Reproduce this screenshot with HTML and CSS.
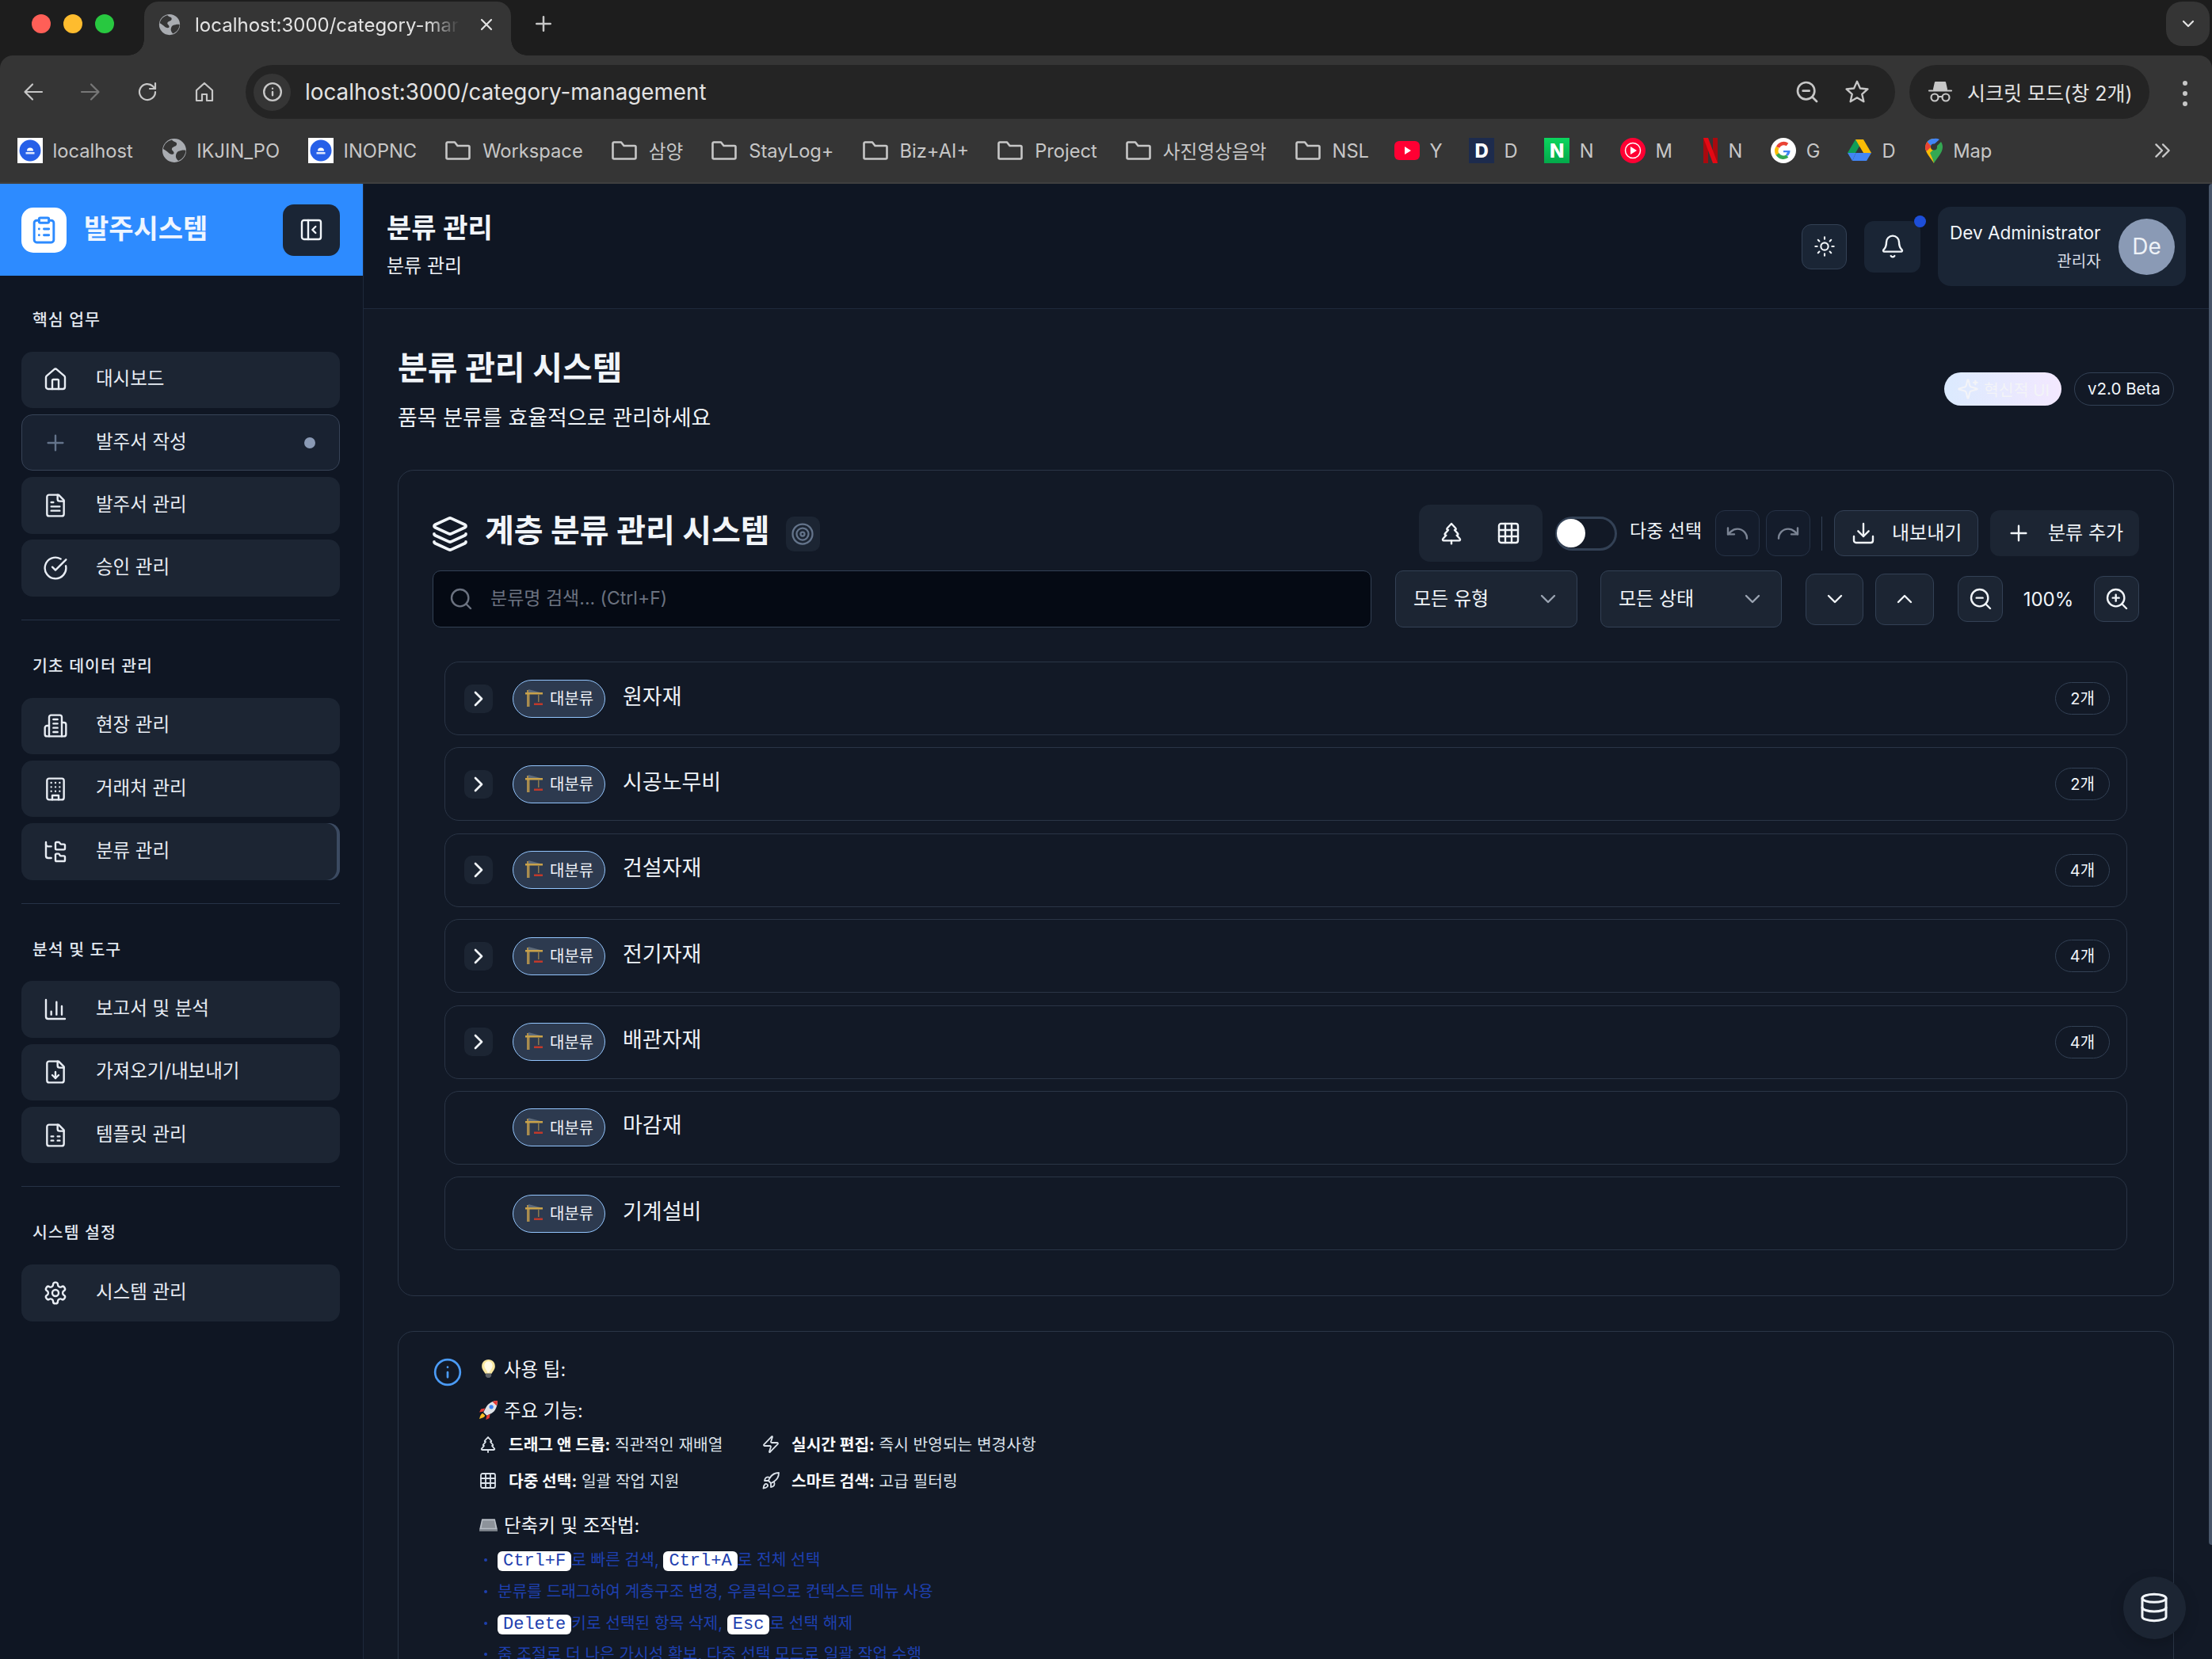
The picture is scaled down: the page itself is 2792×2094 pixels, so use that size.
FILE: index.html
```html
<!DOCTYPE html>
<html lang="ko">
<head>
<meta charset="utf-8">
<title>분류 관리</title>
<link rel="stylesheet" href="styles.css">
</head>
<body>
<svg class="sprite" xmlns="http://www.w3.org/2000/svg">
  <symbol id="home" viewBox="0 0 24 24"><path d="M15 21v-8a1 1 0 0 0-1-1h-4a1 1 0 0 0-1 1v8"/><path d="M3 10a2 2 0 0 1 .709-1.528l7-5.999a2 2 0 0 1 2.582 0l7 5.999A2 2 0 0 1 21 10v9a2 2 0 0 1-2 2H5a2 2 0 0 1-2-2z"/></symbol>
  <symbol id="plus" viewBox="0 0 24 24"><path d="M5 12h14M12 5v14"/></symbol>
  <symbol id="file-text" viewBox="0 0 24 24"><path d="M15 2H6a2 2 0 0 0-2 2v16a2 2 0 0 0 2 2h12a2 2 0 0 0 2-2V7Z"/><path d="M14 2v4a2 2 0 0 0 2 2h4"/><path d="M10 9H8M16 13H8M16 17H8"/></symbol>
  <symbol id="check" viewBox="0 0 24 24"><path d="M21.801 10A10 10 0 1 1 17 3.335"/><path d="m9 11 3 3L22 4"/></symbol>
  <symbol id="building2" viewBox="0 0 24 24"><path d="M6 22V4a2 2 0 0 1 2-2h8a2 2 0 0 1 2 2v18Z"/><path d="M6 12H4a2 2 0 0 0-2 2v6a2 2 0 0 0 2 2h2"/><path d="M18 9h2a2 2 0 0 1 2 2v9a2 2 0 0 1-2 2h-2"/><path d="M10 6h4M10 10h4M10 14h4M10 18h4"/></symbol>
  <symbol id="building" viewBox="0 0 24 24"><rect width="16" height="20" x="4" y="2" rx="2"/><path d="M9 22v-4h6v4"/><path d="M8 6h.01M16 6h.01M12 6h.01M12 10h.01M12 14h.01M16 10h.01M16 14h.01M8 10h.01M8 14h.01"/></symbol>
  <symbol id="folder-tree" viewBox="0 0 24 24"><path d="M20 10a1 1 0 0 0 1-1V6a1 1 0 0 0-1-1h-2.5a1 1 0 0 1-.8-.4l-.9-1.2A1 1 0 0 0 15 3h-2a1 1 0 0 0-1 1v5a1 1 0 0 0 1 1Z"/><path d="M20 21a1 1 0 0 0 1-1v-3a1 1 0 0 0-1-1h-2.9a1 1 0 0 1-.88-.55l-.42-.85a1 1 0 0 0-.92-.6H13a1 1 0 0 0-1 1v5a1 1 0 0 0 1 1Z"/><path d="M3 5a2 2 0 0 0 2 2h3"/><path d="M3 3v13a2 2 0 0 0 2 2h3"/></symbol>
  <symbol id="chart" viewBox="0 0 24 24"><path d="M3 3v16a2 2 0 0 0 2 2h16"/><path d="M18 17V9M13 17V5M8 17v-3"/></symbol>
  <symbol id="file-down" viewBox="0 0 24 24"><path d="M15 2H6a2 2 0 0 0-2 2v16a2 2 0 0 0 2 2h12a2 2 0 0 0 2-2V7Z"/><path d="M14 2v4a2 2 0 0 0 2 2h4"/><path d="M12 18v-6"/><path d="m9 15 3 3 3-3"/></symbol>
  <symbol id="file-sheet" viewBox="0 0 24 24"><path d="M15 2H6a2 2 0 0 0-2 2v16a2 2 0 0 0 2 2h12a2 2 0 0 0 2-2V7Z"/><path d="M14 2v4a2 2 0 0 0 2 2h4"/><path d="M8 13h2M14 13h2M8 17h2M14 17h2"/></symbol>
  <symbol id="settings" viewBox="0 0 24 24"><path d="M12.22 2h-.44a2 2 0 0 0-2 2v.18a2 2 0 0 1-1 1.73l-.43.25a2 2 0 0 1-2 0l-.15-.08a2 2 0 0 0-2.73.73l-.22.38a2 2 0 0 0 .73 2.73l.15.1a2 2 0 0 1 1 1.72v.51a2 2 0 0 1-1 1.74l-.15.09a2 2 0 0 0-.73 2.73l.22.38a2 2 0 0 0 2.73.73l.15-.08a2 2 0 0 1 2 0l.43.25a2 2 0 0 1 1 1.73V20a2 2 0 0 0 2 2h.44a2 2 0 0 0 2-2v-.18a2 2 0 0 1 1-1.73l.43-.25a2 2 0 0 1 2 0l.15.08a2 2 0 0 0 2.73-.73l.22-.39a2 2 0 0 0-.73-2.73l-.15-.08a2 2 0 0 1-1-1.74v-.5a2 2 0 0 1 1-1.74l.15-.09a2 2 0 0 0 .73-2.73l-.22-.38a2 2 0 0 0-2.73-.73l-.15.08a2 2 0 0 1-2 0l-.43-.25a2 2 0 0 1-1-1.73V4a2 2 0 0 0-2-2z"/><circle cx="12" cy="12" r="3"/></symbol>
  <symbol id="clipboard" viewBox="0 0 24 24"><rect width="8" height="4" x="8" y="2" rx="1" ry="1"/><path d="M16 4h2a2 2 0 0 1 2 2v14a2 2 0 0 1-2 2H6a2 2 0 0 1-2-2V6a2 2 0 0 1 2-2h2"/><path d="M12 11h4M12 16h4M8 11h.01M8 16h.01"/></symbol>
  <symbol id="panel" viewBox="0 0 24 24"><rect width="18" height="18" x="3" y="3" rx="2"/><path d="M9 3v18"/><path d="m16 15-3-3 3-3"/></symbol>
  <symbol id="sun" viewBox="0 0 24 24"><circle cx="12" cy="12" r="4"/><path d="M12 2v2M12 20v2M4.93 4.93l1.41 1.41M17.66 17.66l1.41 1.41M2 12h2M20 12h2M6.34 17.66l-1.41 1.41M19.07 4.93l-1.41 1.41"/></symbol>
  <symbol id="bell" viewBox="0 0 24 24"><path d="M10.268 21a2 2 0 0 0 3.464 0"/><path d="M3.262 15.326A1 1 0 0 0 4 17h16a1 1 0 0 0 .74-1.673C19.41 13.956 18 12.499 18 8A6 6 0 0 0 6 8c0 4.499-1.411 5.956-2.738 7.326"/></symbol>
  <symbol id="layers" viewBox="0 0 24 24"><path d="M12.83 2.18a2 2 0 0 0-1.66 0L2.6 6.08a1 1 0 0 0 0 1.83l8.58 3.91a2 2 0 0 0 1.66 0l8.58-3.9a1 1 0 0 0 0-1.83z"/><path d="M2 12a1 1 0 0 0 .58.91l8.6 3.91a2 2 0 0 0 1.65 0l8.58-3.9A1 1 0 0 0 22 12"/><path d="M2 17a1 1 0 0 0 .58.91l8.6 3.91a2 2 0 0 0 1.65 0l8.58-3.9A1 1 0 0 0 22 17"/></symbol>
  <symbol id="target" viewBox="0 0 24 24"><circle cx="12" cy="12" r="10"/><circle cx="12" cy="12" r="6"/><circle cx="12" cy="12" r="2"/></symbol>
  <symbol id="search" viewBox="0 0 24 24"><circle cx="11" cy="11" r="8"/><path d="m21 21-4.3-4.3"/></symbol>
  <symbol id="tree" viewBox="0 0 24 24"><path d="m17 14 3 3.3a1 1 0 0 1-.7 1.7H4.7a1 1 0 0 1-.7-1.7L7 14h-.3a1 1 0 0 1-.7-1.7L9 9h-.2A1 1 0 0 1 8 7.3L12 3l4 4.3a1 1 0 0 1-.8 1.7H15l3 3.3a1 1 0 0 1-.7 1.7H17Z"/><path d="M12 22v-3"/></symbol>
  <symbol id="grid" viewBox="0 0 24 24"><rect width="18" height="18" x="3" y="3" rx="2"/><path d="M3 9h18M3 15h18M9 3v18M15 3v18"/></symbol>
  <symbol id="undo" viewBox="0 0 24 24"><path d="M3 7v6h6"/><path d="M21 17a9 9 0 0 0-9-9 9 9 0 0 0-6 2.3L3 13"/></symbol>
  <symbol id="redo" viewBox="0 0 24 24"><path d="M21 7v6h-6"/><path d="M3 17a9 9 0 0 1 9-9 9 9 0 0 1 6 2.3l3 2.7"/></symbol>
  <symbol id="download" viewBox="0 0 24 24"><path d="M21 15v4a2 2 0 0 1-2 2H5a2 2 0 0 1-2-2v-4"/><path d="m7 10 5 5 5-5"/><path d="M12 15V3"/></symbol>
  <symbol id="down" viewBox="0 0 24 24"><path d="m6 9 6 6 6-6"/></symbol>
  <symbol id="up" viewBox="0 0 24 24"><path d="m18 15-6-6-6 6"/></symbol>
  <symbol id="right" viewBox="0 0 24 24"><path d="m9 18 6-6-6-6"/></symbol>
  <symbol id="zoom-in" viewBox="0 0 24 24"><circle cx="11" cy="11" r="8"/><path d="m21 21-4.3-4.3M11 8v6M8 11h6"/></symbol>
  <symbol id="zoom-out" viewBox="0 0 24 24"><circle cx="11" cy="11" r="8"/><path d="m21 21-4.3-4.3M8 11h6"/></symbol>
  <symbol id="info" viewBox="0 0 24 24"><circle cx="12" cy="12" r="10"/><path d="M12 16v-4M12 8h.01"/></symbol>
  <symbol id="zap" viewBox="0 0 24 24"><path d="M4 14a1 1 0 0 1-.78-1.63l9.9-10.2a.5.5 0 0 1 .86.46l-1.92 6.02A1 1 0 0 0 13 10h7a1 1 0 0 1 .78 1.63l-9.9 10.2a.5.5 0 0 1-.86-.46l1.92-6.02A1 1 0 0 0 11 14z"/></symbol>
  <symbol id="rocket" viewBox="0 0 24 24"><path d="M4.5 16.5c-1.5 1.26-2 5-2 5s3.74-.5 5-2c.71-.84.7-2.13-.09-2.91a2.18 2.18 0 0 0-2.91-.09z"/><path d="m12 15-3-3a22 22 0 0 1 2-3.95A12.88 12.88 0 0 1 22 2c0 2.72-.78 7.5-6 11a22.35 22.35 0 0 1-4 2z"/><path d="M9 12H4s.55-3.03 2-4c1.62-1.08 5 0 5 0"/><path d="M12 15v5s3.03-.55 4-2c1.08-1.62 0-5 0-5"/></symbol>
  <symbol id="database" viewBox="0 0 24 24"><ellipse cx="12" cy="5" rx="9" ry="3"/><path d="M3 5v14a9 3 0 0 0 18 0V5"/><path d="M3 12a9 3 0 0 0 18 0"/></symbol>
  <symbol id="sparkles" viewBox="0 0 24 24"><path d="M9.937 15.5A2 2 0 0 0 8.5 14.063l-6.135-1.582a.5.5 0 0 1 0-.962L8.5 9.936A2 2 0 0 0 9.937 8.5l1.582-6.135a.5.5 0 0 1 .963 0L14.063 8.5A2 2 0 0 0 15.5 9.937l6.135 1.581a.5.5 0 0 1 0 .964L15.5 14.063a2 2 0 0 0-1.437 1.437l-1.582 6.135a.5.5 0 0 1-.963 0z"/><path d="M20 3v4M22 5h-4"/></symbol>
  <symbol id="folder" viewBox="0 0 32 24"><path d="M1.500 3A1.500 1.500 0 0 1 3 1.500h9l3.500 4.500H29A1.500 1.500 0 0 1 30.500 7.500V21a1.500 1.500 0 0 1-1.500 1.500H3A1.500 1.500 0 0 1 1.500 21z"/></symbol>
  <symbol id="back" viewBox="0 0 28 28"><path d="M25 14H4M13 4.500 3.500 14l9.500 9.500"/></symbol>
  <symbol id="forward" viewBox="0 0 28 28"><path d="M3 14h21M15 4.500l9.500 9.500-9.500 9.500"/></symbol>
  <symbol id="reload" viewBox="0 0 28 28"><path d="M24 14a10 10 0 1 1-3-7.100L24 10"/><path d="M24 3v7h-7"/></symbol>
  <symbol id="chrome-home" viewBox="0 0 28 28"><path d="M4 12 14 3l10 9v13H17v-8h-6v8H4z"/></symbol>
  <symbol id="close" viewBox="0 0 20 20"><path d="m4 4 12 12M16 4 4 16"/></symbol>
  <symbol id="star" viewBox="0 0 32 32"><path d="m16 3.500 3.700 8.300 9 .9-6.800 6 2 8.800-7.900-4.600-7.900 4.600 2-8.800-6.800-6 9-.9z"/></symbol>
  <symbol id="incognito" viewBox="0 0 32 32"><path d="M8 13 10 4h12l2 9z" fill="#c7c7c7"/><path d="M2 14.500h28"/><circle cx="9" cy="23" r="4.500"/><circle cx="23" cy="23" r="4.500"/><path d="M13.500 22h5"/></symbol>
  <symbol id="dblright" viewBox="0 0 24 24"><path d="m5 5 7 7-7 7M13 5l7 7-7 7"/></symbol>
  <symbol id="globe" viewBox="0 0 32 32"><circle cx="16" cy="16" r="15" fill="#a9acb1"/><path d="M13 2.500c2 3 7 2 6 6-1 3-5 2-6 5-1 2.500 3 3 2.500 6-.5 2-4 1.500-6 0C7 17 4 15 2 14c1-6 5-10 11-11.500zM21 17c3-1 7-2 9.500-1-.5 6-4 11-9.500 13-2.500-2-3.500-5-3-7 .5-2 1-4 3-5z" fill="#353535"/></symbol>
  <symbol id="crane" viewBox="0 0 24 24"><path d="M3 2h3.500v21H3z" fill="#a98c4e"/><path d="M1 5h22v2.500H1z" fill="#c9a24a"/><path d="M5 1 20 5H5z" fill="#5d6a7a"/><path d="M17 7.500h1.500V17H17z" fill="#8b7a4f"/><path d="M12 18.500h11V21H12z" fill="#c0392b"/></symbol>
  <symbol id="bulb" viewBox="0 0 24 24"><path d="M12 1c5 0 8 3.500 8 8 0 4-2.500 5.500-4 9H8C6.500 14.500 4 13 4 9c0-4.500 3-8 8-8z" fill="#f9e79f"/><path d="M12 3c3 0 5 2.500 5 5.500S14 14 13 17h-2C10 14 7 11.500 7 8.500S9 3 12 3z" fill="#fffbe6"/><path d="M8.500 18h7v3l-2 2h-3l-2-2z" fill="#5f6368"/></symbol>
  <symbol id="rocket-emoji" viewBox="0 0 24 24"><path d="M23 1c-6 0-11 3-14 8l-3 6 4 4 6-3c5-3 7-9 7-15z" fill="#dfe3e8"/><path d="M23 1c-2 0-4 .4-6 1.200L21.800 7c.8-2 1.200-4 1.200-6z" fill="#e53935"/><circle cx="15.500" cy="8.500" r="2.500" fill="#3b82f6"/><path d="M8 10 3 11l-2 4 5-1zM14 17l-1 5-4 2 1-5z" fill="#e53935"/><path d="M5 16c-2 1-3 3-4 7 4-1 6-2 7-4z" fill="#fbbf24"/></symbol>
  <symbol id="keyboard" viewBox="0 0 24 24"><path d="M4 5h16l3 13H1z" fill="#b6bcc4"/><path d="M1 18h22v2H1z" fill="#7f858d"/><path d="M5 7h14l1.500 9h-17z" fill="#8d939b"/></symbol>
  <symbol id="fav-blue" viewBox="0 0 32 32"><rect width="32" height="32" fill="#fff"/><circle cx="16" cy="16" r="13.500" fill="#2760e8"/><path d="M12 16.500a4 4 0 0 1 8 0z" fill="#fff"/><rect x="10.500" y="18" width="11" height="2.500" fill="#dfe8ff"/></symbol>
  <symbol id="fav-yt" viewBox="0 0 32 32"><rect y="4" width="32" height="24" rx="6" fill="#ff0033"/><path d="m13 11 8 5-8 5z" fill="#fff"/></symbol>
  <symbol id="fav-music" viewBox="0 0 32 32"><circle cx="16" cy="16" r="16" fill="#ff0033"/><circle cx="16" cy="16" r="9.500" fill="none" stroke="#fff" stroke-width="1.500"/><path d="m13 11 8 5-8 5z" fill="#fff"/></symbol>
  <symbol id="fav-netflix" viewBox="0 0 20 32"><path d="M1 0h6v32H1z" fill="#a80a0f"/><path d="M13 0h6v32h-6z" fill="#a80a0f"/><path d="M1 0h6l12 32h-6z" fill="#e50914"/></symbol>
  <symbol id="fav-google" viewBox="0 0 32 32"><circle cx="16" cy="16" r="16" fill="#fff"/><path d="M9 12a8 8 0 0 1 12-3.500" fill="none" stroke="#ea4335" stroke-width="4.500"/><path d="M8.600 21a8.600 8.600 0 0 1 0-9" fill="none" stroke="#fbbc05" stroke-width="4.500"/><path d="M8.600 20.500A8.500 8.500 0 0 0 21 23" fill="none" stroke="#34a853" stroke-width="4.500"/><path d="M16 16h8.500c0 3-1 5.500-3.500 7l-2-2c1-.8 1.500-1.500 1.800-2.800H16z" fill="#4285f4"/></symbol>
  <symbol id="fav-drive" viewBox="0 0 32 28"><path d="M11 0h10L11 17H1z" fill="#0f9d58"/><path d="M11 0h10l10 17H21z" fill="#fbbc05"/><path d="M7 27h18l6-10H11.500z" fill="#4285f4"/><path d="M1 17h10.500L7 27z" fill="#4285f4"/></symbol>
  <symbol id="fav-maps" viewBox="0 0 24 32"><path d="M12 32C8 25 1 19 1 11.500A11 11 0 0 1 12 1z" fill="#fbbc05"/><path d="M12 32c4-7 11-13 11-20.500 0-2.500-.8-4.500-2-6.500L7 19c2 4 4 9 5 13z" fill="#34a853"/><path d="M12 1a11 11 0 0 0-8.500 4L9 11l10-9a11 11 0 0 0-7-1z" fill="#4285f4"/><path d="M3.500 5A11 11 0 0 0 1 11.500c0 2 .6 4 1.500 5.500L9 11z" fill="#ea4335"/><circle cx="12" cy="11.500" r="4" fill="#353535"/></symbol>
</svg>

<header class="browser">
  <div class="tabstrip">
    <div class="lights"><i class="light light-red"></i><i class="light light-yellow"></i><i class="light light-green"></i></div>
    <div class="tab">
      <svg class="fav fav-tab"><use href="#globe"/></svg>
      <span class="tab-title">localhost:3000/category-mar</span>
      <svg class="ci tab-close"><use href="#close"/></svg>
    </div>
    <svg class="ci new-tab"><use href="#plus"/></svg>
    <div class="tab-menu"><svg class="ci tab-menu-icon"><use href="#down"/></svg></div>
  </div>
  <div class="toolbar">
    <svg class="ci nav-icon"><use href="#back"/></svg>
    <svg class="ci nav-icon nav-dim"><use href="#forward"/></svg>
    <svg class="ci nav-icon"><use href="#reload"/></svg>
    <svg class="ci nav-icon"><use href="#chrome-home"/></svg>
    <div class="omnibox">
      <span class="site-info"><svg class="ci site-info-icon"><use href="#info"/></svg></span>
      <span class="url">localhost:3000/category-management</span>
      <svg class="ci omni-zoom"><use href="#zoom-out"/></svg>
      <svg class="ci omni-star"><use href="#star"/></svg>
    </div>
    <div class="incognito">
      <svg class="ci incognito-icon"><use href="#incognito"/></svg>
      <span>시크릿 모드(창 2개)</span>
    </div>
    <div class="kebab"><i></i><i></i><i></i></div>
  </div>
  <nav class="bookmarks">
    <a class="bm"><svg class="fav"><use href="#fav-blue"/></svg>localhost</a>
    <a class="bm"><svg class="fav"><use href="#globe"/></svg>IKJIN_PO</a>
    <a class="bm"><svg class="fav"><use href="#fav-blue"/></svg>INOPNC</a>
    <a class="bm"><svg class="ci folder"><use href="#folder"/></svg>Workspace</a>
    <a class="bm"><svg class="ci folder"><use href="#folder"/></svg>삼양</a>
    <a class="bm"><svg class="ci folder"><use href="#folder"/></svg>StayLog+</a>
    <a class="bm"><svg class="ci folder"><use href="#folder"/></svg>Biz+AI+</a>
    <a class="bm"><svg class="ci folder"><use href="#folder"/></svg>Project</a>
    <a class="bm"><svg class="ci folder"><use href="#folder"/></svg>사진영상음악</a>
    <a class="bm bm-tight"><svg class="ci folder"><use href="#folder"/></svg>NSL</a>
    <a class="bm bm-short"><svg class="fav"><use href="#fav-yt"/></svg>Y</a>
    <a class="bm bm-short"><span class="tile tile-d">D</span>D</a>
    <a class="bm bm-short"><span class="tile tile-n">N</span>N</a>
    <a class="bm bm-wide"><svg class="fav"><use href="#fav-music"/></svg>M</a>
    <a class="bm"><svg class="fav fav-nf"><use href="#fav-netflix"/></svg>N</a>
    <a class="bm bm-short"><svg class="fav"><use href="#fav-google"/></svg>G</a>
    <a class="bm"><svg class="fav"><use href="#fav-drive"/></svg>D</a>
    <a class="bm"><svg class="fav fav-pin"><use href="#fav-maps"/></svg>Map</a>
    <svg class="ci bm-more"><use href="#dblright"/></svg>
  </nav>
</header>

<div class="app">
  <aside class="sidebar">
    <div class="brand">
      <span class="brand-logo"><svg class="i brand-icon"><use href="#clipboard"/></svg></span>
      <span class="brand-name">발주시스템</span>
      <span class="collapse"><svg class="i collapse-icon"><use href="#panel"/></svg></span>
    </div>
    <nav class="side-nav">
      <section class="group">
        <h3 class="group-label">핵심 업무</h3>
        <a class="item"><svg class="i"><use href="#home"/></svg><span>대시보드</span></a>
        <a class="item item-new"><svg class="i item-plus"><use href="#plus"/></svg><span>발주서 작성</span><i class="item-dot"></i></a>
        <a class="item"><svg class="i"><use href="#file-text"/></svg><span>발주서 관리</span></a>
        <a class="item"><svg class="i"><use href="#check"/></svg><span>승인 관리</span></a>
      </section>
      <section class="group">
        <h3 class="group-label">기초 데이터 관리</h3>
        <a class="item"><svg class="i"><use href="#building2"/></svg><span>현장 관리</span></a>
        <a class="item"><svg class="i"><use href="#building"/></svg><span>거래처 관리</span></a>
        <a class="item item-active"><svg class="i"><use href="#folder-tree"/></svg><span>분류 관리</span></a>
      </section>
      <section class="group">
        <h3 class="group-label">분석 및 도구</h3>
        <a class="item"><svg class="i"><use href="#chart"/></svg><span>보고서 및 분석</span></a>
        <a class="item"><svg class="i"><use href="#file-down"/></svg><span>가져오기/내보내기</span></a>
        <a class="item"><svg class="i"><use href="#file-sheet"/></svg><span>템플릿 관리</span></a>
      </section>
      <section class="group group-last">
        <h3 class="group-label">시스템 설정</h3>
        <a class="item"><svg class="i"><use href="#settings"/></svg><span>시스템 관리</span></a>
      </section>
    </nav>
  </aside>

  <div class="main">
    <header class="topbar">
      <div class="topbar-title">
        <h2>분류 관리</h2>
        <p>분류 관리</p>
      </div>
      <div class="topbar-actions">
        <button class="theme-btn"><svg class="i"><use href="#sun"/></svg></button>
        <button class="bell-btn"><svg class="i"><use href="#bell"/></svg><i class="bell-dot"></i></button>
        <div class="user">
          <div class="user-text"><strong>Dev Administrator</strong><span>관리자</span></div>
          <span class="avatar">De</span>
        </div>
      </div>
    </header>

    <main class="content">
      <div class="page-head">
        <div>
          <h1>분류 관리 시스템</h1>
          <p>품목 분류를 효율적으로 관리하세요</p>
        </div>
        <div class="badges">
          <span class="badge-new"><svg class="i"><use href="#sparkles"/></svg>혁신적 UI</span>
          <span class="badge-ver">v2.0 Beta</span>
        </div>
      </div>

      <section class="card tree-card">
        <div class="title-row">
          <div class="card-title">
            <svg class="i layers"><use href="#layers"/></svg>
            <h2>계층 분류 관리 시스템</h2>
            <span class="target"><svg class="i"><use href="#target"/></svg></span>
          </div>
          <div class="tools">
            <div class="view-toggle"><svg class="i"><use href="#tree"/></svg><svg class="i"><use href="#grid"/></svg></div>
            <span class="switch"><i></i></span>
            <span class="switch-label">다중 선택</span>
            <button class="ghost"><svg class="i"><use href="#undo"/></svg></button>
            <button class="ghost"><svg class="i"><use href="#redo"/></svg></button>
            <span class="tool-sep"></span>
            <button class="action action-export"><svg class="i"><use href="#download"/></svg><span>내보내기</span></button>
            <button class="action action-add"><svg class="i"><use href="#plus"/></svg><span>분류 추가</span></button>
          </div>
        </div>
        <div class="filter-row">
          <label class="search"><svg class="i"><use href="#search"/></svg><span>분류명 검색... (Ctrl+F)</span></label>
          <div class="select"><span>모든 유형</span><svg class="i"><use href="#down"/></svg></div>
          <div class="select select-2"><span>모든 상태</span><svg class="i"><use href="#down"/></svg></div>
          <button class="square"><svg class="i"><use href="#down"/></svg></button>
          <button class="square square-2"><svg class="i"><use href="#up"/></svg></button>
          <button class="zoom"><svg class="i"><use href="#zoom-out"/></svg></button>
          <span class="zoom-val">100%</span>
          <button class="zoom"><svg class="i"><use href="#zoom-in"/></svg></button>
        </div>
        <ul class="tree">
          <li class="row"><span class="expander"><svg class="i"><use href="#right"/></svg></span><span class="level"><svg class="crane"><use href="#crane"/></svg><span>대분류</span></span><span class="row-name">원자재</span><span class="count">2개</span></li>
          <li class="row"><span class="expander"><svg class="i"><use href="#right"/></svg></span><span class="level"><svg class="crane"><use href="#crane"/></svg><span>대분류</span></span><span class="row-name">시공노무비</span><span class="count">2개</span></li>
          <li class="row"><span class="expander"><svg class="i"><use href="#right"/></svg></span><span class="level"><svg class="crane"><use href="#crane"/></svg><span>대분류</span></span><span class="row-name">건설자재</span><span class="count">4개</span></li>
          <li class="row"><span class="expander"><svg class="i"><use href="#right"/></svg></span><span class="level"><svg class="crane"><use href="#crane"/></svg><span>대분류</span></span><span class="row-name">전기자재</span><span class="count">4개</span></li>
          <li class="row"><span class="expander"><svg class="i"><use href="#right"/></svg></span><span class="level"><svg class="crane"><use href="#crane"/></svg><span>대분류</span></span><span class="row-name">배관자재</span><span class="count">4개</span></li>
          <li class="row"><span class="expander expander-empty"></span><span class="level"><svg class="crane"><use href="#crane"/></svg><span>대분류</span></span><span class="row-name">마감재</span></li>
          <li class="row"><span class="expander expander-empty"></span><span class="level"><svg class="crane"><use href="#crane"/></svg><span>대분류</span></span><span class="row-name">기계설비</span></li>
        </ul>
      </section>

      <section class="card tips-card">
        <svg class="i tips-info"><use href="#info"/></svg>
        <div class="tips">
          <p class="tips-head"><svg class="emoji emoji-bulb"><use href="#bulb"/></svg>사용 팁:</p>
          <p class="tips-head tips-features"><svg class="emoji"><use href="#rocket-emoji"/></svg>주요 기능:</p>
          <div class="feature-grid">
            <div class="feature"><svg class="i"><use href="#tree"/></svg><span><b>드래그 앤 드롭:</b> 직관적인 재배열</span></div>
            <div class="feature"><svg class="i"><use href="#zap"/></svg><span><b>실시간 편집:</b> 즉시 반영되는 변경사항</span></div>
            <div class="feature"><svg class="i"><use href="#grid"/></svg><span><b>다중 선택:</b> 일괄 작업 지원</span></div>
            <div class="feature"><svg class="i"><use href="#rocket"/></svg><span><b>스마트 검색:</b> 고급 필터링</span></div>
          </div>
          <p class="tips-head tips-keys"><svg class="emoji"><use href="#keyboard"/></svg>단축키 및 조작법:</p>
          <ul class="key-list">
            <li><kbd>Ctrl+F</kbd>로 빠른 검색, <kbd>Ctrl+A</kbd>로 전체 선택</li>
            <li>분류를 드래그하여 계층구조 변경, 우클릭으로 컨텍스트 메뉴 사용</li>
            <li><kbd>Delete</kbd>키로 선택된 항목 삭제, <kbd>Esc</kbd>로 선택 해제</li>
            <li>줌 조절로 더 나은 가시성 확보, 다중 선택 모드로 일괄 작업 수행</li>
          </ul>
        </div>
      </section>
    </main>
  </div>
</div>

<button class="fab"><svg class="i"><use href="#database"/></svg></button>
<div class="scroll-thumb"></div>
</body>
</html>
```

FILE: styles.css
```css
* { box-sizing: border-box; }
html, body { margin: 0; padding: 0; }
body {
  width: 2792px;
  height: 2094px;
  overflow: hidden;
  position: relative;
  display: flex;
  flex-direction: column;
  background: #121926;
  color: #f1f5f9;
  font-family: Inter, "Noto Sans CJK KR", "Noto Sans", sans-serif;
}
h1, h2, h3, p, ul { margin: 0; padding: 0; }
ul { list-style: none; }
button { font: inherit; color: inherit; padding: 0; border: 0; background: none; }
.sprite { display: none; }

/* shared icons */
.i { width: 32px; height: 32px; flex: none; fill: none; stroke: currentColor; stroke-width: 1.800; stroke-linecap: round; stroke-linejoin: round; }
.ci { flex: none; fill: none; stroke: #c7c7c7; stroke-width: 2.2; stroke-linecap: round; stroke-linejoin: round; }
.fav { width: 32px; height: 32px; flex: none; }

/* browser */
.browser { flex: none; background: #1d1d1d; }
.tabstrip { height: 70px; display: flex; align-items: flex-end; }
.lights { display: flex; gap: 16px; padding: 0 38px 0 40px; align-self: flex-start; margin-top: 18px; }
.light { width: 24px; height: 24px; border-radius: 50%; }
.light-red { background: #ff5f57; }
.light-yellow { background: #febc2e; }
.light-green { background: #28c840; }
.tab { position: relative; width: 463px; height: 68px; background: #353535; border-radius: 18px 18px 0 0; display: flex; align-items: center; padding: 0 0 10px 18px; }
.tab::before, .tab::after { content: ""; position: absolute; bottom: 0; width: 20px; height: 20px; }
.tab::before { left: -20px; background: radial-gradient(circle at 0 0, transparent 19.500px, #353535 20px); }
.tab::after { right: -20px; background: radial-gradient(circle at 100% 0, transparent 19.500px, #353535 20px); }
.fav-tab { width: 28px; height: 28px; }
.tab-title { width: 334px; margin-left: 18px; overflow: hidden; white-space: nowrap; font-size: 24px; color: #e3e3e3; -webkit-mask-image: linear-gradient(90deg, #000 88%, transparent 100%); mask-image: linear-gradient(90deg, #000 88%, transparent 100%); }
.tab-close { width: 20px; height: 20px; margin-left: 24px; stroke: #e3e3e3; }
.new-tab { width: 30px; height: 30px; margin: 0 0 25px 26px; stroke-width: 2; }
.tab-menu { width: 55px; height: 56px; margin: 0 3px 12px auto; background: #353535; border-radius: 20px; display: flex; align-items: center; justify-content: center; }
.tab-menu-icon { width: 24px; height: 24px; stroke: #e3e3e3; }
.toolbar { height: 80px; background: #353535; border-radius: 16px 16px 0 0; display: flex; align-items: flex-start; padding-top: 12px; }
.nav-icon { width: 28px; height: 28px; margin: 20px 0 0 28px; }
.nav-icon + .nav-icon { margin-left: 44px; }
.nav-dim { stroke: #777; }
.omnibox { width: 2082px; height: 68px; margin-left: 38px; background: #242424; border-radius: 34px; display: flex; align-items: center; padding: 0 0 0 10px; }
.site-info { width: 47px; height: 47px; border-radius: 50%; background: #353535; display: flex; align-items: center; justify-content: center; }
.site-info-icon { width: 26px; height: 26px; }
.url { margin-left: 18px; font-size: 27.800px; color: #e3e3e3; white-space: nowrap; flex: 1; }
.omni-zoom { width: 32px; height: 32px; stroke-width: 2; }
.omni-star { width: 34px; height: 34px; margin: 0 31px 0 30px; }
.incognito { width: 303px; height: 68px; margin-left: 18px; background: #242424; border-radius: 34px; display: flex; align-items: center; gap: 18px; padding-left: 23px; color: #e3e3e3; font-size: 25px; white-space: nowrap; }
.incognito-icon { width: 32px; height: 32px; }
.kebab { width: 6px; margin: 20px 0 0 42px; display: flex; flex-direction: column; gap: 7px; }
.kebab i { width: 6px; height: 6px; border-radius: 50%; background: #c7c7c7; }
.bookmarks { height: 82px; background: #353535; border-bottom: 2px solid #3f3f3f; display: flex; align-items: center; padding-left: 22px; gap: 36px; font-size: 23.700px; color: #c7c7c7; white-space: nowrap; }
.bm { display: flex; align-items: center; gap: 12.500px; }
.bm-short { margin-right: -2.500px; }
.bm-wide { margin-right: 2px; }
.bm-tight { margin-right: -4px; }
.folder { width: 32px; height: 24px; margin-right: 2.500px; stroke-width: 2.600; }
.tile { width: 32px; height: 32px; display: flex; align-items: center; justify-content: center; font-weight: 800; font-size: 24px; color: #fff; }
.tile-d { background: #1d2b4d; }
.tile-n { background: linear-gradient(#0bd65e, #03a94a); }
.fav-nf { width: 20px; }
.fav-pin { width: 24px; }
.bm-more { width: 26px; height: 26px; margin-left: auto; margin-right: 50px; }

/* layout */
.app { flex: 1; min-height: 0; display: flex; }
.sidebar { width: 459px; flex: none; background: #0f1623; border-right: 1px solid #1e293b; }
.brand { height: 116px; background: #2d8bff; display: flex; align-items: center; padding: 0 29px 0 27px; }
.brand-logo { width: 57px; height: 57px; border-radius: 15px; background: #fff; display: flex; align-items: center; justify-content: center; color: #2d8bff; }
.brand-icon { width: 37px; height: 37px; stroke-width: 1.900; }
.brand-name { margin: -8px 0 0 22px; font-size: 34px; font-weight: 700; color: #eef5ff; flex: 1; }
.collapse { width: 72px; height: 65px; border-radius: 14px; background: #1a2535; display: flex; align-items: center; justify-content: center; color: #f1f5f9; }
.side-nav { padding: 41px 29px 0 27px; }
.group { display: flex; flex-direction: column; gap: 7.700px; padding-bottom: 29px; margin-bottom: 43.200px; border-bottom: 1px solid #263246; }
.group-last { border-bottom: 0; }
.group-label { height: 30px; line-height: 30px; margin: 0 0 17px 14px; font-size: 20.500px; font-weight: 500; letter-spacing: 1px; color: #e2e8f0; }
.item { position: relative; height: 71.500px; border-radius: 14px; background: #1c2533; display: flex; align-items: center; padding-left: 27px; gap: 35px; color: #e8edf4; font-size: 23.500px; }
.item span { margin-top: -6px; }
.item-new { background: #192231; border: 1px solid #374357; padding-left: 26px; }
.item-plus { color: #64748b; }
.item-dot { width: 14px; height: 14px; border-radius: 50%; background: #8a9ab5; position: absolute; right: 30px; top: 28px; }
.item-active { box-shadow: inset -4px 0 0 #3b4a61; }

.main { flex: 1; min-width: 0; display: flex; flex-direction: column; }
.topbar { height: 158px; flex: none; background: #0f1623; border-bottom: 1px solid #1e293b; display: flex; justify-content: space-between; padding: 29px 33px 0 29px; }
.topbar-title { padding-top: 5px; }
.topbar-title h2 { font-size: 34px; font-weight: 600; line-height: 44px; }
.topbar-title p { font-size: 24px; line-height: 32px; margin-top: 10px; color: #eef2f7; }
.topbar-actions { display: flex; align-items: center; align-self: flex-start; height: 100px; }
.theme-btn { width: 57px; height: 57px; border-radius: 12px; background: #1a2535; border: 1px solid #334155; display: flex; align-items: center; justify-content: center; }
.bell-btn { position: relative; width: 71px; height: 65px; margin-left: 22px; border-radius: 12px; background: #1a2535; display: flex; align-items: center; justify-content: center; }
.theme-btn .i { width: 28px; height: 28px; }
.bell-dot { position: absolute; right: -7px; top: -7px; width: 15px; height: 15px; border-radius: 50%; background: #1d4ed8; }
.user { width: 313px; height: 100px; margin-left: 22px; border-radius: 16px; background: #1a2535; display: flex; align-items: center; padding: 0 14px 0 15px; justify-content: space-between; }
.user-text { display: flex; flex-direction: column; align-items: flex-end; }
.user-text strong { font-size: 22.500px; font-weight: 400; line-height: 32px; }
.user-text span { font-size: 20px; line-height: 28px; margin-top: 6px; color: #d7dde6; }
.avatar { width: 71px; height: 71px; border-radius: 50%; background: #8a9ab5; display: flex; align-items: center; justify-content: center; font-size: 28px; color: #eef2f7; }

.content { flex: 1; min-height: 0; background: #121926; padding: 47px 48px 0 43px; }
.page-head { display: flex; justify-content: space-between; align-items: center; margin-bottom: 47px; }
.page-head h1 { font-size: 41px; line-height: 54px; font-weight: 700; }
.page-head p { font-size: 27px; line-height: 36px; margin-top: 19px; }
.badges { display: flex; gap: 16px; margin-top: -2px; }
.badge-new, .badge-ver { height: 42px; border-radius: 21px; display: flex; align-items: center; font-size: 20.500px; }
.badge-new { width: 148px; padding-left: 16px; gap: 6px; background: linear-gradient(90deg, #dbeafe, #f3e8ff); color: #f3f4f8; }
.badge-new .i { width: 28px; height: 28px; }
.badge-ver { width: 126px; justify-content: center; border: 1px solid #334155; }

.card { border: 1px solid #2a3546; border-radius: 20px; background: #121926; }
.tree-card { padding: 43px 43px 57px; margin-bottom: 44px; }
.title-row { display: flex; justify-content: space-between; align-items: center; }
.card-title { display: flex; align-items: center; }
.layers { width: 48px; height: 48px; margin: 1px 0 0 -2px; stroke-width: 1.900; }
.card-title h2 { font-size: 40px; line-height: 54px; font-weight: 700; margin: -6px 0 0 20px; }
.target { width: 43px; height: 44px; margin: 1px 0 0 20px; border-radius: 10px; background: #1c2533; display: flex; align-items: center; justify-content: center; color: #64748b; }
.target .i { width: 30px; height: 30px; }
.tools { display: flex; align-items: center; }
.view-toggle { width: 156px; height: 72px; border-radius: 14px; background: #1c2533; display: flex; align-items: center; justify-content: center; gap: 40px; padding-right: 3px; }
.switch { width: 78px; height: 43px; margin-left: 16px; border-radius: 22px; background: #121926; border: 3px solid #334155; display: flex; align-items: center; }
.switch i { width: 36px; height: 36px; border-radius: 50%; background: #fff; margin-left: -1px; }
.switch-label { width: 92px; margin: -6px 16px 0; font-size: 23px; line-height: 32px; white-space: nowrap; }
.ghost { width: 56px; height: 58px; border-radius: 12px; border: 1px solid #263246; background: #141c2b; color: #7b8494; display: flex; align-items: center; justify-content: center; }
.ghost + .ghost { margin-left: 8px; }
.tool-sep { width: 1px; height: 43px; background: #334155; margin: 0 15px 0 14px; }
.action { height: 58px; border-radius: 12px; background: #1c2533; display: flex; align-items: center; font-size: 24px; }
.action span { margin-top: -5px; }
.action-export { width: 182px; padding-left: 20px; gap: 20px; border: 1px solid #334155; }
.action-add { width: 188px; margin-left: 15px; padding-left: 20px; gap: 21px; }

.filter-row { display: flex; align-items: center; margin-top: 11px; }
.search { flex: 1; height: 72px; border: 1px solid #334155; border-radius: 10px; background: #050a14; display: flex; align-items: center; padding-left: 19px; gap: 21px; color: #6b7280; font-size: 23px; }
.search span { margin-top: -7px; }
.select { width: 230px; height: 72px; margin-left: 30px; border: 1px solid #334155; border-radius: 10px; background: #1c2533; display: flex; align-items: center; justify-content: space-between; padding: 0 20px 0 22px; font-size: 24px; }
.select span { margin-top: -5px; }
.select-2 { width: 229px; margin-left: 29px; }
.select .i { color: #9aa4b2; }
.square { width: 73px; height: 65px; margin-left: 30px; border: 1px solid #334155; border-radius: 12px; background: #1c2533; display: flex; align-items: center; justify-content: center; }
.square-2 { margin-left: 15px; width: 74px; }
.zoom { width: 57px; height: 58px; margin-left: 30px; border: 1px solid #334155; border-radius: 12px; background: #1c2533; display: flex; align-items: center; justify-content: center; }
.zoom-val { width: 115px; margin-right: -30px; text-align: center; font-size: 24px; }

.tree { margin: 43px 15px 0; display: flex; flex-direction: column; gap: 15.400px; }
.row { height: 93px; border: 1px solid #2a3546; border-radius: 18px; display: flex; align-items: center; padding: 0 21px 0 24px; }
.expander { width: 36px; height: 36px; border-radius: 10px; background: #1c2533; display: flex; align-items: center; justify-content: center; color: #f1f5f9; }
.expander-empty { background: none; }
.expander .i { flex: none; stroke-width: 2; }
.level { width: 117px; height: 48px; margin-left: 25px; border-radius: 24px; border: 1.500px solid #93c5fd; background: #2d3a4f; display: flex; align-items: center; padding-left: 14px; gap: 8px; font-size: 20px; color: #eef2f7; }
.level span { margin-top: -2px; }
.crane { width: 24px; height: 24px; flex: none; margin-top: -2px; }
.row-name { margin-left: 22px; font-size: 27px; line-height: 38px; margin-top: -4px; color: #eef2f7; flex: 1; }
.count { width: 69px; height: 41px; border: 1px solid #334155; border-radius: 21px; display: flex; align-items: center; justify-content: center; font-size: 20px; padding-bottom: 2px; }

.tips-card { display: flex; padding: 28px 44px 0 43px; height: 460px; }
.tips-info { width: 38px; height: 38px; margin-top: 4px; color: #4b9bf5; stroke-width: 1.700; }
.tips { margin-left: 20px; }
.tips-head { display: flex; align-items: center; height: 36px; font-size: 23.500px; white-space: nowrap; }
.emoji { width: 25px; height: 25px; margin-right: 7px; flex: none; }
.tips-features { margin-top: 16px; }
.feature-grid { display: grid; grid-template-columns: 357px auto; row-gap: 14px; margin-top: 9px; }
.feature { display: flex; align-items: center; gap: 14px; height: 32px; font-size: 20.300px; color: #dbe2ea; white-space: nowrap; }
.feature .i { width: 24px; height: 24px; margin-top: 2px; }
.feature b { font-weight: 700; color: #f8fafc; }
.tips-keys { margin-top: 22px; }
.key-list { margin-top: 7px; font-size: 20.300px; color: #1e40af; }
.key-list li { position: relative; height: 39.600px; line-height: 39px; padding-left: 24px; white-space: nowrap; }
.key-list li::before { content: ""; position: absolute; left: 7px; top: 18px; width: 4px; height: 4px; border-radius: 50%; background: #1e40af; }
kbd { display: inline-block; height: 25px; line-height: 25px; padding: 0 7px; border-radius: 6px; background: #fff; font-family: "Liberation Mono", "DejaVu Sans Mono", monospace; font-size: 22px; color: #1e40af; }

.fab { position: absolute; left: 2679.500px; top: 1989.500px; width: 79px; height: 79px; border-radius: 50%; background: #1c2533; display: flex; align-items: center; justify-content: center; color: #f1f5f9; box-shadow: 0 6px 18px rgba(0,0,0,.18); }
.fab .i { width: 40px; height: 40px; stroke-width: 1.800; }
.scroll-thumb { position: absolute; right: 0; top: 232px; width: 4px; height: 1718px; background: #475569; border-radius: 4px 0 0 4px; }
```
